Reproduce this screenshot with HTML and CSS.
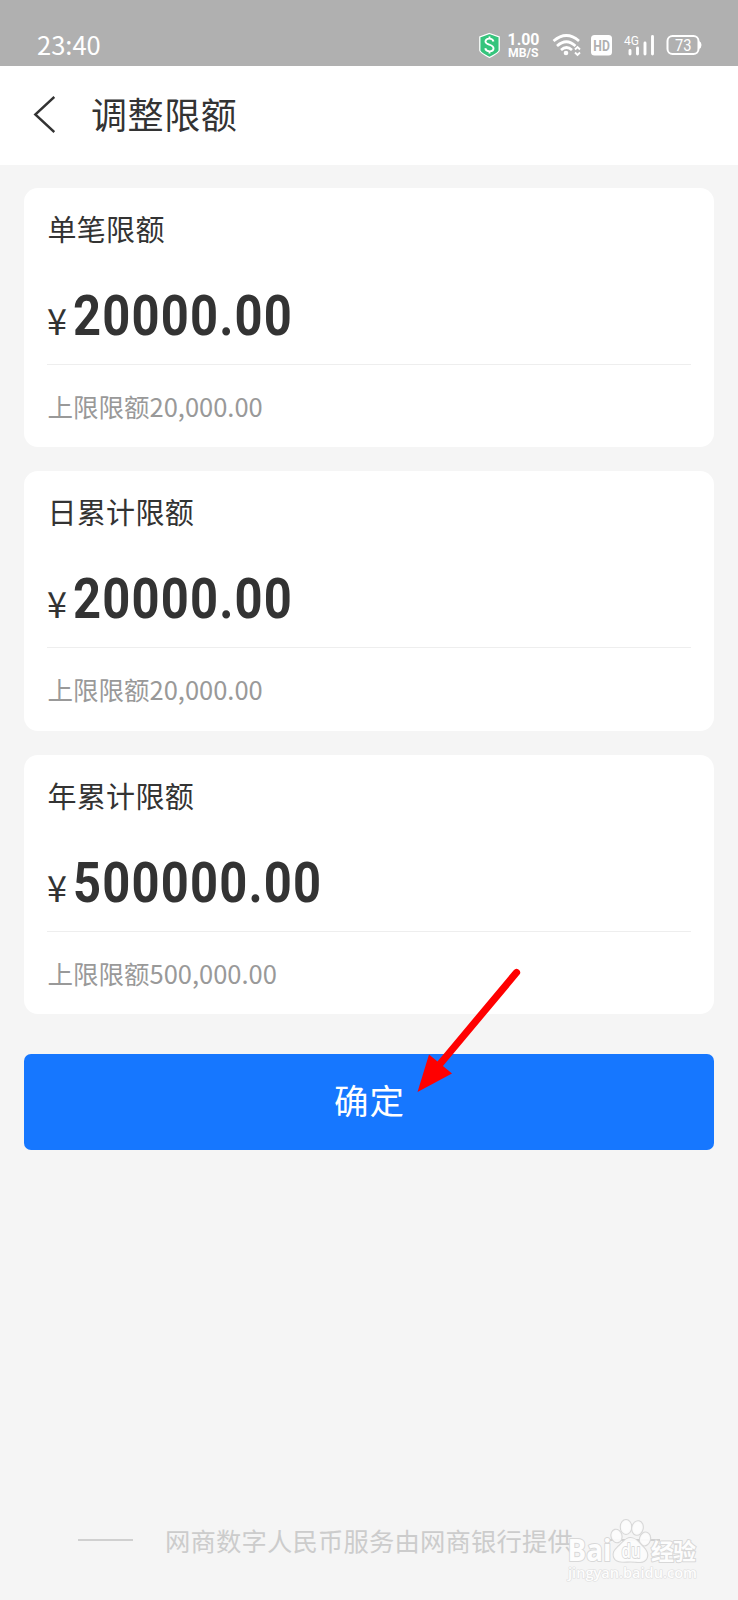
FILE: index.html
```html
<!DOCTYPE html>
<html lang="zh-CN">
<head>
<meta charset="utf-8">
<title>调整限额</title>
<link rel="stylesheet" href="styles.css">
</head>
<body>
<div class="screen">
  <div class="status">
    <span class="clock">23:40</span>
    <svg class="status-icons" width="238" height="30" viewBox="0 0 238 30">
      <path d="M11.5 1.5L21.200 5V18.500Q21 20.500 11.500 25.500Q2 20.500 1.800 18.500V5Z" fill="#35c47c" stroke="#fff" stroke-width="1.300"/>
      <path d="M15.500 9.500C14.500 5.500 7.300 5.700 7.500 9.800C7.700 13.300 15.500 12 15.500 16.300C15.500 20.300 8.300 20.500 7.200 16.300M11.500 4.500V7M11.500 19V21.500" fill="none" stroke="#fff" stroke-width="1.900"/>
      <text class="speed" x="29.500" y="13" textLength="32" lengthAdjust="spacingAndGlyphs">1.00</text>
      <text class="unit" x="30" y="25" textLength="30.500" lengthAdjust="spacingAndGlyphs">MB/S</text>
      <g fill="none" stroke="#fff" stroke-width="2.700">
        <path d="M75.500 9Q88.500-2 101 9M79 14Q88.500 5.500 97.500 14M83 18Q88.500 13 94 18"/>
        <path d="M97 17.500L99.500 15L102 17.500M97 20.500L99.500 23L102 20.500" stroke-width="1.900"/>
      </g>
      <circle cx="88" cy="21" r="2.300" fill="#fff"/>
      <rect x="113" y="3" width="21" height="20.500" rx="3.500" fill="#fff"/>
      <text class="hd" x="115.300" y="18.500" textLength="16.500" lengthAdjust="spacingAndGlyphs">HD</text>
      <text class="net" x="146" y="12.800" textLength="15" lengthAdjust="spacingAndGlyphs">4G</text>
      <path d="M152 18.500V22M159.500 16V22M167 11V22M174.500 4.500V22" stroke="#fff" stroke-width="2.900" stroke-linecap="round"/>
      <rect x="189.500" y="4" width="31" height="18" rx="5" fill="none" stroke="#fff" stroke-width="2"/>
      <path d="M221 9Q223.500 10 223.500 13T221 17Z" fill="#fff"/>
      <text class="battery" x="197" y="18.700" textLength="16.500" lengthAdjust="spacingAndGlyphs">73</text>
    </svg>
  </div>
  <div class="header">
    <svg class="back" width="24" height="40" viewBox="0 0 24 40"><path d="M23.300 2L4.300 19.500L23.300 37" fill="none" stroke="#333" stroke-width="2.400"/></svg>
    <h1 class="title">调整限额</h1>
  </div>
  <div class="content">
    <div class="card">
      <div class="label">单笔限额</div>
      <div class="amount"><span class="yen">¥</span><span class="num">20000.00</span></div>
      <div class="limit">上限限额20,000.00</div>
    </div>
    <div class="card">
      <div class="label">日累计限额</div>
      <div class="amount"><span class="yen">¥</span><span class="num">20000.00</span></div>
      <div class="limit">上限限额20,000.00</div>
    </div>
    <div class="card">
      <div class="label">年累计限额</div>
      <div class="amount"><span class="yen">¥</span><span class="num">500000.00</span></div>
      <div class="limit">上限限额500,000.00</div>
    </div>
    <div class="confirm">确定</div>
  </div>
  <div class="footer"><i class="rule"></i><span class="provider">网商数字人民币服务由网商银行提供</span><i class="rule"></i></div>
  <svg class="arrow" width="120" height="140" viewBox="0 0 120 140">
    <path d="M106.500 12.500L30 104" stroke="#f00" stroke-width="7.200" stroke-linecap="round"/>
    <path d="M7.500 132L19 94.500L42 113.500Z" fill="#f00"/>
  </svg>
  <svg class="watermark" width="144" height="70" viewBox="0 0 144 70">
    <g class="paw">
      <ellipse cx="51.500" cy="21" rx="5" ry="6.300" transform="rotate(-15 51.500 21)"/>
      <ellipse cx="61" cy="12" rx="5.200" ry="7"/>
      <ellipse cx="72.500" cy="13" rx="5.200" ry="6.800" transform="rotate(12 72.500 13)"/>
      <ellipse cx="80" cy="24" rx="5" ry="6.500" transform="rotate(15 80 24)"/>
      <path d="M65.500 23C60 23 57 29 53 32C49 36 48 38 49 42C51 48 59 46.500 65.500 46.500S80 49 82 42C83 38 81 35 78 32C74 28 71 23 65.500 23Z"/>
    </g>
    <text class="wm-baidu" x="2.500" y="46" textLength="44" lengthAdjust="spacingAndGlyphs">Bai</text>
    <text class="wm-du" x="56.500" y="43" textLength="19" lengthAdjust="spacingAndGlyphs">du</text>
    <text class="wm-cn" x="86" y="44.500" textLength="45">经验</text>
    <text class="wm-url" x="3" y="63" textLength="129" lengthAdjust="spacingAndGlyphs">jingyan.baidu.com</text>
  </svg>
</div>
</body>
</html>
```
FILE: styles.css
```css
* { box-sizing: border-box; }
body {
  margin: 0;
  font-family: "Noto Sans CJK SC", sans-serif;
  color: #333;
}
.screen {
  position: relative;
  display: flex;
  flex-direction: column;
  width: 738px;
  height: 1600px;
  overflow: hidden;
  background: #f5f5f5;
}
.status {
  display: flex;
  justify-content: space-between;
  height: 66px;
  padding: 32px 22px 0 37px;
  background: #b0b0b0;
  color: #fff;
}
.clock {
  margin-top: -2px;
  font: 25.500px/27px "Noto Sans CJK SC", sans-serif;
}
.status-icons { fill: #fff; font-family: Roboto, sans-serif; }
.speed { font-size: 16px; font-weight: 700; }
.unit { font-size: 12px; font-weight: 700; }
.hd { font-size: 15px; font-weight: 700; fill: #b0b0b0; }
.net { font-size: 13.500px; }
.battery { font-size: 16px; }
.header {
  display: flex;
  align-items: center;
  height: 99px;
  padding-left: 31px;
  background: #fff;
}
.back { margin-top: -2px; }
.title {
  margin: -6px 0 0 36px;
  font-size: 36px;
  font-weight: 400;
  line-height: 50px;
  letter-spacing: 0.600px;
}
.content {
  display: flex;
  flex-direction: column;
  gap: 24px;
  padding: 22.500px 24px 0;
}
.card {
  height: 259.500px;
  padding: 18px 23px 0;
  border-radius: 14px;
  background: #fff;
}
.label {
  padding-left: 0.500px;
  font-size: 29px;
  line-height: 44px;
  letter-spacing: 0.300px;
}
.amount {
  display: flex;
  align-items: baseline;
  height: 115px;
  padding-top: 34px;
  border-bottom: 1px solid #eee;
  line-height: 64px;
}
.yen {
  width: 25.500px;
  font-size: 36px;
}
.num {
  font-family: Roboto, sans-serif;
  font-size: 55px;
  font-weight: 700;
  letter-spacing: 1.300px;
  transform: scaleX(0.89);
  transform-origin: left;
}
.limit {
  padding: 21px 0 0 0.500px;
  color: #999;
  font-size: 25.500px;
  line-height: 40px;
}
.confirm {
  height: 96px;
  margin-top: 16px;
  padding-left: 1px;
  border-radius: 7px;
  background: #1677ff;
  color: #fff;
  font-size: 34.500px;
  line-height: 91px;
  letter-spacing: 1px;
  text-align: center;
}
.footer {
  display: flex;
  align-items: center;
  justify-content: center;
  gap: 32px;
  height: 40px;
  margin-top: auto;
  margin-bottom: 40px;
  color: #ccc;
}
.provider { font-size: 25.300px; line-height: 40px; letter-spacing: 0.200px; white-space: nowrap; }
.rule { width: 55px; height: 2px; background: #d0d0d0; }
.arrow { position: absolute; left: 410px; top: 960px; }
.watermark {
  position: absolute;
  left: 565px;
  top: 1515px;
  font-family: "Open Sans", sans-serif;
  fill: #fdfdfd;
  stroke: #d8d8d8;
  stroke-width: 2px;
  stroke-linejoin: round;
  paint-order: stroke;
}
.paw { stroke-width: 2.200px; fill-opacity: 0.9; }
.wm-baidu { font-size: 30px; font-weight: 700; }
.wm-du { font-size: 20px; font-weight: 600; stroke-width: 1.800px; }
.wm-cn { font-family: "Noto Sans CJK SC", sans-serif; font-size: 23px; font-weight: 700; }
.wm-url { font-size: 14px; font-weight: 600; stroke: #dedede; stroke-width: 1.200px; }
```
